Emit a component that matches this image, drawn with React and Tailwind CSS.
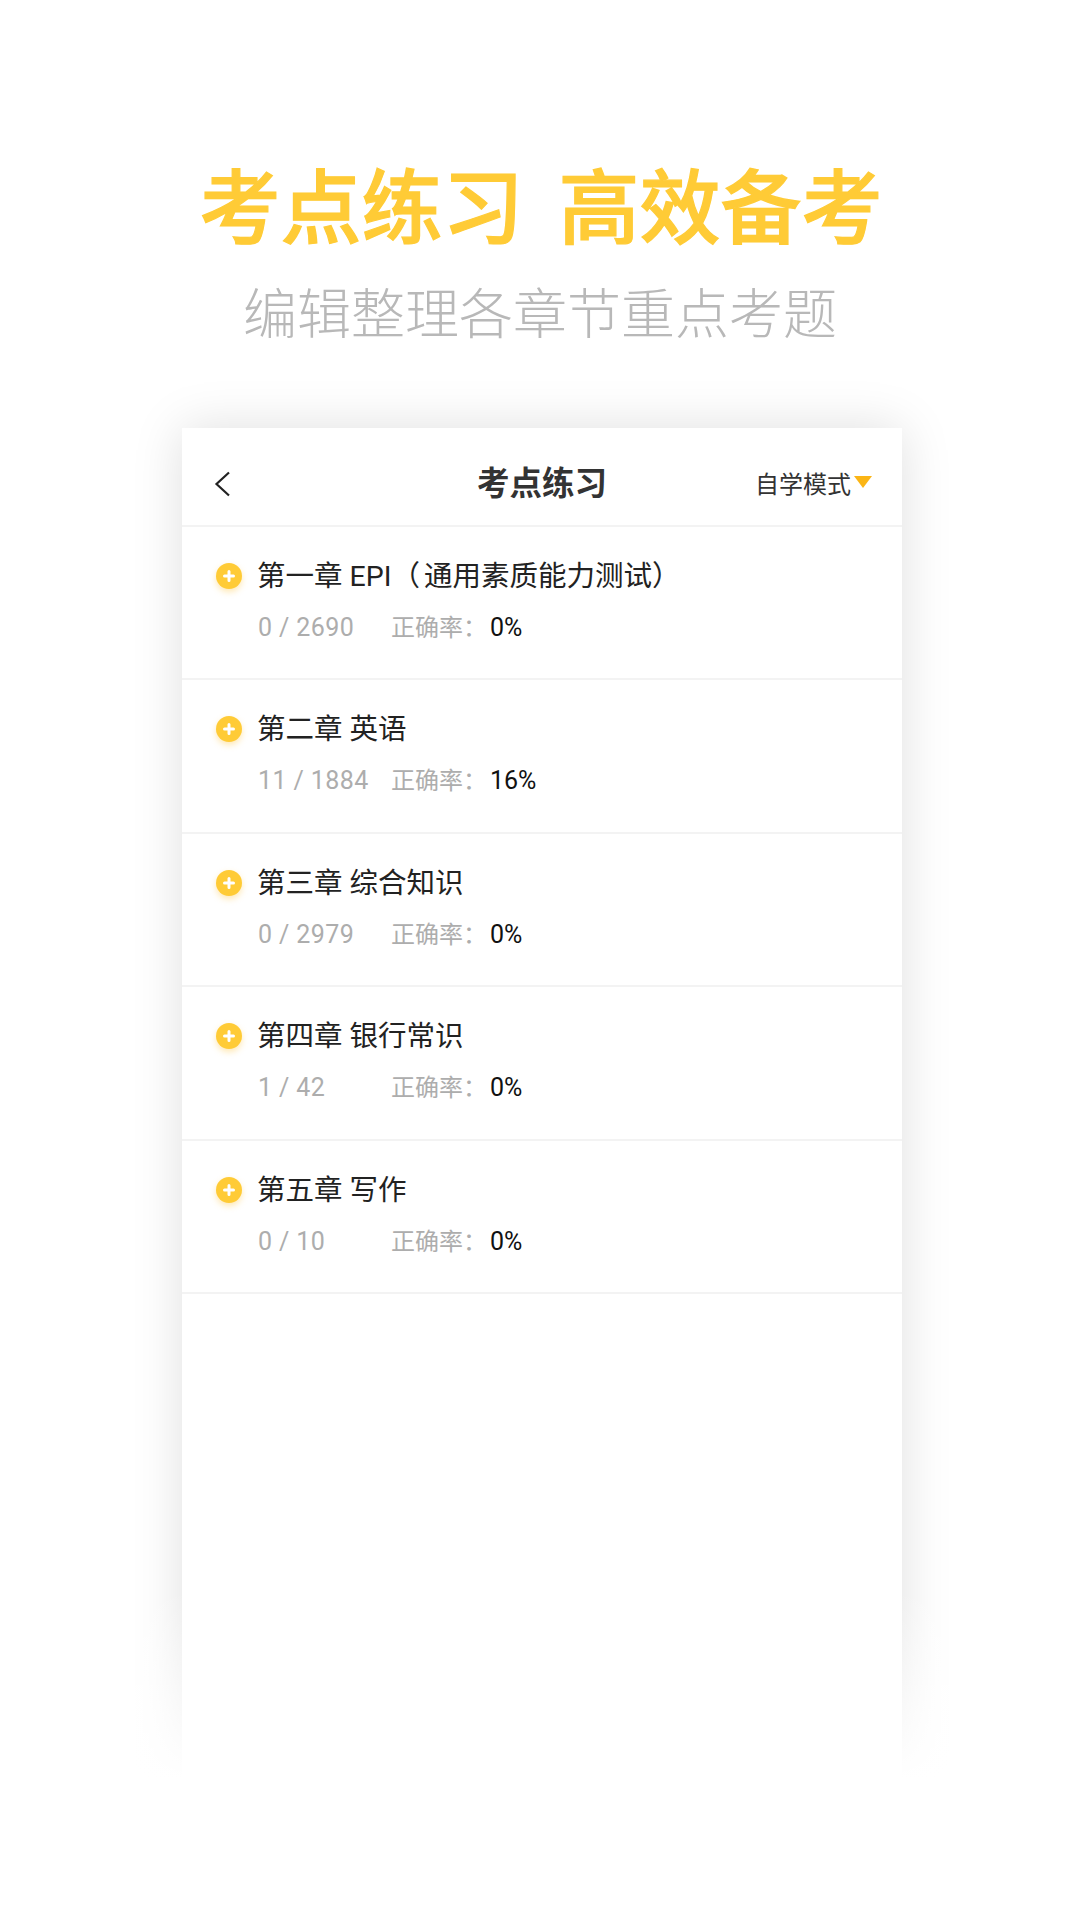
import React from "react";

const CHAPTERS = [
  {
    name: (
      <>
        第一章 EPI<span className="mr-[4px]">（</span>通用素质能力测试）
      </>
    ),
    progress: "0 / 2690",
    rate: "0%",
  },
  { name: "第二章 英语", progress: "11 / 1884", rate: "16%" },
  { name: "第三章 综合知识", progress: "0 / 2979", rate: "0%" },
  { name: "第四章 银行常识", progress: "1 / 42", rate: "0%" },
  { name: "第五章 写作", progress: "0 / 10", rate: "0%" },
];

function PlusDot() {
  return (
    <span className="w-[26px] h-[26px] rounded-full bg-[#ffcb36] shadow-[0_3px_6px_rgba(255,190,40,0.35)] flex items-center justify-center shrink-0">
      <svg width="14" height="14" viewBox="0 0 14 14">
        <path d="M7 2.5v9M2.5 7h9" stroke="#fff" strokeWidth="3" strokeLinecap="round" />
      </svg>
    </span>
  );
}

function ChapterRow({ name, progress, rate }) {
  return (
    <div className="h-[153.4px] border-b-2 border-[#f3f3f3] pl-[34px] pt-[30px]">
      <div className="flex items-center gap-[15px] h-[38px]">
        <PlusDot />
        <span className="text-[28.5px] text-[#222222] leading-[38px] pt-[2px]">{name}</span>
      </div>
      <div className="flex items-center pl-[42px] mt-[15px] text-[24px] leading-[36px]">
        <span className="w-[133px] text-[25px] text-[#adadad] tracking-[0.4px]">{progress}</span>
        <span className="text-[#adadad]">正确率：</span>
        <span className="text-[25px] text-[#111111] ml-[3px]">{rate}</span>
      </div>
    </div>
  );
}

export default function App() {
  return (
    <div
      className="relative w-[1080px] h-[1920px] overflow-hidden bg-white flex flex-col items-center"
      style={{ fontFamily: 'Roboto, "Noto Sans CJK SC", sans-serif' }}
    >
      {/* Titulo */}
      <h1 className="mt-[160px] ml-[2px] text-[81px] leading-[100px] font-medium text-[#ffcb36] whitespace-nowrap [word-spacing:15px] [-webkit-text-stroke:1.2px_#ffcb36]">
        考点练习 高效备考
      </h1>
      <p className="mt-[20px] text-[54px] leading-[72px] font-light text-[#b8b8b8] whitespace-nowrap">
        编辑整理各章节重点考题
      </p>

      {/* Tarjeta */}
      <div className="mt-[76px] ml-[4px] w-[720px] h-[1360px] bg-white shadow-[0_0_48px_rgba(0,0,0,0.13)] shrink-0">
        <header className="relative h-[99px] border-b-2 border-[#f3f3f3] flex items-center justify-center">
          <svg className="absolute left-[32px] top-[43px]" width="18" height="26" viewBox="0 0 18 26">
            <path d="M15 1.5 2.5 13 15 24.5" fill="none" stroke="#222222" strokeWidth="2.2" />
          </svg>
          <span className="text-[32.5px] leading-[40px] font-bold text-[#333333] mt-[15px]">考点练习</span>
          <div className="absolute right-[30px] top-[39px] flex items-center gap-[3px]">
            <span className="text-[24px] leading-[36px] text-[#333333]">自学模式</span>
            <span className="w-0 h-0 border-l-[9px] border-r-[9px] border-t-[12px] border-l-transparent border-r-transparent border-t-[#fbb515] mb-[6px]" />
          </div>
        </header>
        {CHAPTERS.map((c) => (
          <ChapterRow key={c.progress} {...c} />
        ))}
      </div>

      {/* Desvanecido inferior */}
      <div className="absolute left-0 right-0 top-[1590px] h-[190px] bg-gradient-to-b from-white/0 to-white" />
      <div className="absolute left-0 right-0 top-[1780px] bottom-0 bg-white" />
    </div>
  );
}
